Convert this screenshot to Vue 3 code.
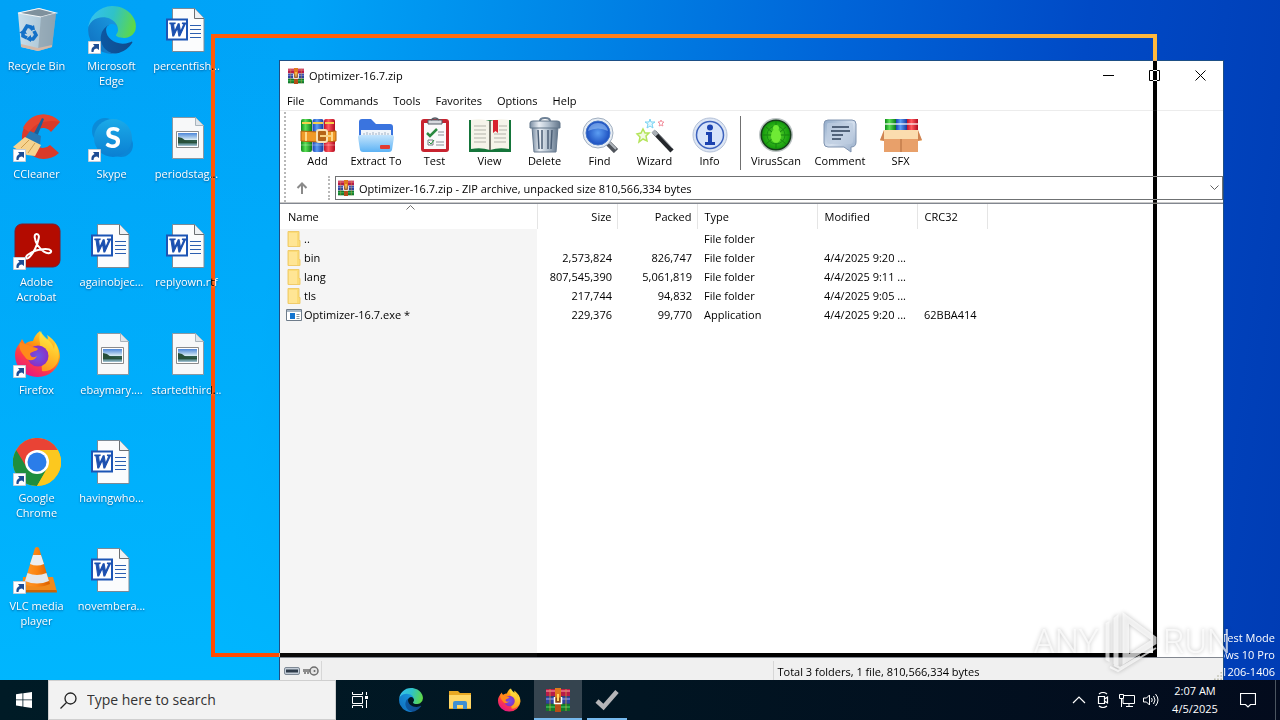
<template>
  <div class="desktop">
    <svg class="sprite" aria-hidden="true">
      <defs>
        <linearGradient id="g-edge-dark" x1="0" x2="1"><stop offset="0" stop-color="#0c59a4" /><stop offset="1" stop-color="#114a8b" /></linearGradient>
        <linearGradient id="g-edge-blue" x1="1" y1="0" x2="0" y2="1"><stop offset="0" stop-color="#1b9de2" /><stop offset="1" stop-color="#0f6cbd" /></linearGradient>
        <linearGradient id="g-edge-green" x1="0" y1="0.3" x2="1" y2="0.5"><stop offset="0" stop-color="#35c1f1" /><stop offset="0.5" stop-color="#2fc2c8" /><stop offset="1" stop-color="#5fd945" /></linearGradient>
        <linearGradient id="g-fox" x1="0.9" y1="0" x2="0.3" y2="1"><stop offset="0" stop-color="#fff44f" /><stop offset="0.4" stop-color="#ff980e" /><stop offset="0.7" stop-color="#ff3b47" /><stop offset="1" stop-color="#e31587" /></linearGradient>
        <linearGradient id="g-flame" x1="0.6" y1="0" x2="0.4" y2="1"><stop offset="0" stop-color="#fff44f" /><stop offset="1" stop-color="#ffa916" /></linearGradient>
        <linearGradient id="g-skype" x1="0" x2="0" y2="1"><stop offset="0" stop-color="#1baae8" /><stop offset="1" stop-color="#0a7fd2" /></linearGradient>
        <linearGradient id="g-bin" x1="0" x2="1"><stop offset="0" stop-color="#dfe5ea" /><stop offset="0.6" stop-color="#c3ccd4" /><stop offset="1" stop-color="#9aa9b5" /></linearGradient>
        <linearGradient id="g-cone" x1="0" x2="1"><stop offset="0" stop-color="#ff9a2c" /><stop offset="0.5" stop-color="#fb8410" /><stop offset="1" stop-color="#d95f00" /></linearGradient>
        <linearGradient id="g-folder" x1="0" x2="0" y2="1"><stop offset="0" stop-color="#c4e4fc" /><stop offset="1" stop-color="#5db3f5" /></linearGradient>
        <linearGradient id="g-metal" x1="0" x2="1"><stop offset="0" stop-color="#7b8ea3" /><stop offset="0.3" stop-color="#e9eef4" /><stop offset="0.6" stop-color="#b3c1cf" /><stop offset="1" stop-color="#62758a" /></linearGradient>
        <linearGradient id="g-bubble" x1="0" y1="0" x2="1" y2="1"><stop offset="0" stop-color="#8fa9c8" /><stop offset="0.5" stop-color="#d5e0ee" /><stop offset="1" stop-color="#93a9c6" /></linearGradient>
        <linearGradient id="g-sky" x1="0" x2="0" y2="1"><stop offset="0" stop-color="#4c86d8" /><stop offset="0.5" stop-color="#d3e8f3" /><stop offset="0.55" stop-color="#2c5a48" /><stop offset="0.75" stop-color="#33655a" /><stop offset="1" stop-color="#a8c8dc" /></linearGradient>
        <radialGradient id="g-lens"><stop offset="0" stop-color="#5b9df2" /><stop offset="1" stop-color="#1c4fc0" /></radialGradient>
        <radialGradient id="g-virus"><stop offset="0" stop-color="#5fdc2e" /><stop offset="1" stop-color="#139a0c" /></radialGradient>
        <radialGradient id="g-purple"><stop offset="0" stop-color="#6b57e8" /><stop offset="1" stop-color="#8b2fc4" /></radialGradient>
        <linearGradient id="g-red" x1="0" x2="1"><stop offset="0" stop-color="#c4102a" /><stop offset="0.4" stop-color="#ff5a5f" /><stop offset="1" stop-color="#b3091f" /></linearGradient>
        <linearGradient id="g-blue" x1="0" x2="1"><stop offset="0" stop-color="#1a3fb4" /><stop offset="0.4" stop-color="#5a9cf5" /><stop offset="1" stop-color="#1a3a9c" /></linearGradient>
        <linearGradient id="g-green" x1="0" x2="1"><stop offset="0" stop-color="#0d8a1a" /><stop offset="0.4" stop-color="#5be055" /><stop offset="1" stop-color="#0a7a18" /></linearGradient>
      </defs>

      <!-- desktop icons, 48 x 48 -->
      <symbol id="recycle" viewBox="0 0 48 48">
        <path d="M5 7 26 2l17 5-4 34-14 4-17-4z" fill="url(#g-bin)" opacity="0.9" />
        <path d="M5 7 26 2.500l17 4.500-15 4z" fill="#7f919d" stroke="#f4f7f9" stroke-width="1.200" />
        <path d="M28 11 43 7l-4 34-14 4z" fill="#8fa1ae" opacity="0.75" />
        <path d="M8 38l17 4 14-3v2l-14 4-17-4z" fill="#d4b9a8" />
        <path d="M11 25l3-5 4 1 2 3M21 25l2 4-3 4h-3M14 32l-4-2v-3" fill="none" stroke="#1471c8" stroke-width="3.600" />
        <path d="M22 24l-6-1 5-4zM18 29v7l-5-3zM6 27l5-4 3 5z" fill="#1471c8" />
      </symbol>
      <symbol id="edge" viewBox="4 5 257 256">
        <path fill="url(#g-edge-dark)" d="M235.680 195.460a93.730 93.730 0 0 1-10.540 4.710 101.870 101.870 0 0 1-35.900 6.460c-47.320 0-88.540-32.550-88.540-74.320A31.480 31.480 0 0 1 117.130 105c-42.800 1.800-53.800 46.400-53.800 72.530 0 73.880 68.090 81.370 82.760 81.370 7.910 0 19.840-2.300 27-4.560l1.310-.44a128.340 128.340 0 0 0 66.600-52.800 4 4 0 0 0-5.320-5.640z" />
        <path fill="url(#g-edge-blue)" d="M110.340 246.340A79.200 79.200 0 0 1 87.600 225a80.720 80.720 0 0 1 29.530-120c3.120-1.470 8.450-4.130 15.540-4a32.350 32.350 0 0 1 25.690 13 31.880 31.880 0 0 1 6.360 18.660c0-.21 24.460-79.600-80-79.600-43.900 0-80 41.660-80 78.210a130.150 130.150 0 0 0 12.110 56 128 128 0 0 0 156.380 67.110 75.550 75.550 0 0 1-62.780-8z" />
        <path fill="url(#g-edge-green)" d="M156.940 153.780c-.81 1.050-3.300 2.500-3.300 5.660 0 2.610 1.700 5.120 4.720 7.230 14.380 10 41.490 8.680 41.560 8.680a59.560 59.560 0 0 0 30.270-8.350A61.380 61.380 0 0 0 260.500 114.190c.26-22.410-8-37.310-11.340-43.910C228 28.880 182.300 5 132.610 5a128 128 0 0 0-128 126.200c.48-36.540 36.800-66.050 80-66.050 3.500 0 23.460.34 42 10.070 16.340 8.580 24.900 18.940 30.850 29.210 6.180 10.670 7.280 24.150 7.280 29.520s-2.740 13.330-7.800 19.830z" />
      </symbol>
      <symbol id="word" viewBox="0 0 48 48">
        <path d="M9.500 2.500h22l9.500 10v33H9.500z" fill="#fbfcfd" stroke="#7c8a96" />
        <path d="M31.500 2.500v10H41" fill="#eef1f4" stroke="#6b6f73" />
        <path d="M27 19.500h11M27 23.500h11M27 27.500h11M27 31.500h11" stroke="#2b5eb0" />
        <path d="M4 13.500h20v20H4z" fill="#fff" stroke="#1c55b5" stroke-width="2" />
        <text x="14" y="30" text-anchor="middle" font-family="Liberation Serif, serif" font-size="19" font-weight="700" font-style="italic" fill="#1c50b0" stroke="#1c50b0">W</text>
      </symbol>
      <symbol id="image" viewBox="0 0 48 48">
        <path d="M9.500 3.500h23l8 8v33h-31z" fill="#f7f8f9" stroke="#8a98a3" />
        <path d="M32.500 3.500v8h8" fill="#dfe5ea" stroke="#a9b3bb" />
        <path d="M13.500 17.500h22v16h-22z" fill="#fff" stroke="#8b8b8b" />
        <path d="M15 19h19v13H15z" fill="url(#g-sky)" />
        <path d="M15 23l4 1 4 3 11 1v1H15z" fill="#28503a" />
      </symbol>
      <symbol id="ccleaner" viewBox="0 0 48 48">
        <path d="M47 8A22 22 0 1 0 46 39l-9-8A10 10 0 1 1 38 18z" fill="#d93a2a" />
        <path d="M47 8A22 22 0 0 0 10 14l6 4Q26 4 47 8z" fill="#e5462f" />
        <path d="M29 4l2 1-7 18-4-2z" fill="#1b5f99" />
        <path d="M17 17l11 5-1 9-15-7z" fill="#2778b5" />
        <path d="M12 23l16 8-6 11-8-1-14-8z" fill="#f6d38f" />
        <path d="M8 34l8-8M15 39l7-10" stroke="#cf9d4d" />
      </symbol>
      <symbol id="skype" viewBox="0 0 48 48">
        <circle cx="17" cy="17" r="13" fill="#0b8bd8" />
        <circle cx="33" cy="31" r="12" fill="#0b86d6" />
        <circle cx="25" cy="24" r="19" fill="url(#g-skype)" />
        <text x="25" y="34" text-anchor="middle" font-family="Lato, sans-serif" font-size="29" font-weight="900" fill="#fff">S</text>
      </symbol>
      <symbol id="acrobat" viewBox="0 0 48 48">
        <rect x="2" y="2" width="45" height="43" rx="7" fill="#b30b00" stroke="#7e1a2c" />
        <path d="M23.500 12c-3 0-2 6 1 11 4 6 9 9 12 8s2-4-4-4c-7 0-14 3-18 6-3 3-1 5 2 2 4-4 8-12 9-18 1-3 0-5-2-5z" fill="none" stroke="#fff" stroke-width="2" />
      </symbol>
      <symbol id="firefox" viewBox="0 0 48 48">
        <path d="M7 13l2-4 3 5c2-2 5-3 8-3 1-4 3-7 7-10 2 4 3 6 7 9 1-1 1-3 0-5 8 5 13 13 13 22A22 22 0 0 1 25 47 22 22 0 0 1 2 25c0-5 2-9 5-12z" fill="url(#g-fox)" />
        <path d="M28 1c1 6 11 9 13 18l1-6c5 7 5 17 1 22-4 5-9 7-14 6l-2-28c-1-4-1-8 1-12z" fill="url(#g-flame)" opacity="0.850" />
        <circle cx="25" cy="26" r="10.500" fill="url(#g-purple)" />
        <path d="M7 12c3 2 8 2 12 5 3 0 5 1 6 2-2 3-7 2-8 5 1 4 4 4 7 2-2 5-9 6-12 1-3-4-7-8-5-15z" fill="#ff8a1a" />
      </symbol>
      <symbol id="chrome" viewBox="0 0 48 48">
        <circle cx="24" cy="24" r="24" fill="#fbbc04" />
        <path d="M24 24 3.200 12A24 24 0 0 0 24 48l10.400-18z" fill="#1e8e3e" />
        <path d="M24 12h20.800a24 24 0 0 1-20.800 36l10.400-18z" fill="#fcc81f" />
        <path d="M3.200 12A24 24 0 0 1 44.800 12H24L14 30z" fill="#e94335" />
        <circle cx="24" cy="24" r="12" fill="#fff" />
        <circle cx="24" cy="24" r="9.500" fill="#2b7de9" />
      </symbol>
      <symbol id="vlc" viewBox="0 0 48 48">
        <path d="M10 31h30l4 15H9z" fill="#f08a1c" />
        <path d="M9 44h34.500l.5 2.500H9z" fill="#c96405" />
        <path d="M22 2q2-2 4 0l11 36q-13 6-26 0z" fill="url(#g-cone)" />
        <path d="M20 9h8l3 9q-7 3-14 0z" fill="#eceef0" />
        <path d="M14.500 27q9.500 4 19 0l2.500 8q-12 5-24 0z" fill="#e4e7ea" />
      </symbol>
      <symbol id="shortcut" viewBox="0 0 13 13">
        <path d="M.5.5h12v12H.5z" fill="#fff" stroke="#c3cdd8" />
        <path d="M3.500 11c-.5-3 .5-5 3-6L5 3h6v6L9 7.500C7 7.500 5.500 8.500 5.500 11z" fill="#1d4d94" />
      </symbol>

      <!-- WinRAR -->
      <symbol id="rar" viewBox="0 0 24 24">
        <path d="M0 1h24v7H0z" fill="#b81c48" /><path d="M0 2h24v2H0z" fill="#e0607a" />
        <path d="M0 8.500h24v7H0z" fill="#2f449f" /><path d="M0 10h24v2H0z" fill="#6577cc" />
        <path d="M0 16h24v7H0z" fill="#137a2b" /><path d="M0 18h24v2H0z" fill="#30a94c" />
        <path d="M4 1v22M20 1v22" stroke="#d8a23c" stroke-opacity="0.700" />
        <path d="M9 0h6v24H9z" fill="#e07a1c" />
        <path d="M9 16h6v8H9z" fill="#b54d18" />
        <path d="M8.500 9.500h7v6h-7z" fill="#8a4516" />
        <path d="M8.500 9v6.500h7V9" fill="none" stroke="#fff" stroke-width="1.500" />
        <path d="M12 6v7" stroke="#ffd561" stroke-width="2" />
      </symbol>
      <symbol id="add" viewBox="0 0 36 36">
        <rect x="1" y="2" width="11" height="33" rx="2" fill="url(#g-green)" />
        <rect x="12.500" y="2" width="11" height="33" rx="2" fill="url(#g-blue)" />
        <rect x="24" y="2" width="11" height="33" rx="2" fill="url(#g-red)" />
        <path d="M2 6h9M13 6h10M25 6h9" stroke="#f5d04c" stroke-width="2" />
        <path d="M1 28h11M12.500 28h11M24 28h11" stroke="#fff" stroke-opacity="0.350" />
        <path d="M1 14q17 2 35 0v10q-18 2-35 0z" fill="#f09a28" stroke="#b5610d" />
        <path d="M6 15v9M32 15v9" stroke="#ffd98a" stroke-width="2" />
        <rect x="17" y="13" width="10" height="12" rx="2" fill="#b56418" stroke="#f8e2b4" stroke-width="2" />
        <path d="M20 19h11" stroke="#f8d080" stroke-width="2" />
      </symbol>
      <symbol id="extract" viewBox="0 0 36 36">
        <path d="M1 5q0-3 3-3h9l5 5h14q3 0 3 3v16H1z" fill="#3a74df" />
        <path d="M3 13h30v12H3z" fill="#f1f5fa" />
        <path d="M6 16v3M9 15v4M12 16v3M15 15v4M18 16v3M21 15v4M24 16v3M27 15v4M30 16v3" stroke="#9eb0c4" />
        <path d="M0 20q0-2 2-2h32q2 0 2 2l-2 13q-.5 2-3 2H5q-2.500 0-3-2z" fill="url(#g-folder)" />
        <rect x="22" y="28" width="10" height="4" rx="1" fill="#e23b32" />
      </symbol>
      <symbol id="test" viewBox="0 0 36 36">
        <rect x="4" y="2" width="28" height="33" rx="3" fill="#c8232f" />
        <path d="M7 6h22v26H7z" fill="#fafafa" />
        <path d="M11 3h14v4H11z" fill="#d7dade" stroke="#555d66" />
        <path d="M14 3q4-4 8 0" fill="none" stroke="#555d66" stroke-width="1.500" />
        <path d="M10 16l3 3 7-7" fill="none" stroke="#2b8a3f" stroke-width="2.500" />
        <path d="M21 15h6M21 18h6M19 25h8M19 28h8" stroke="#8d9299" />
        <path d="M11 23h5v5h-5z" fill="none" stroke="#777d84" /><path d="M12 25l2 2 3-4" stroke="#23943a" fill="none" />
      </symbol>
      <symbol id="view" viewBox="0 0 42 36">
        <path d="M0 3h42v32H0z" fill="#15753a" />
        <path d="M2 3q10-2 19 1 9-3 19-1v29q-10-2-19 1-9-3-19-1z" fill="#f6f4ea" />
        <path d="M21 4v29" stroke="#77796d" stroke-width="2" />
        <path d="M5 9h12M5 13h12M5 17h12M5 21h12M5 25h12M25 17h12M25 21h12M25 25h12M30 9h8M30 13h8" stroke="#b3b3aa" />
        <path d="M24 3h5v13l-2.500-2-2.500 2z" fill="#d8222f" />
      </symbol>
      <symbol id="delete" viewBox="0 0 36 36">
        <path d="M13 4q0-3 5-3t5 3" fill="none" stroke="#6e8196" stroke-width="2" />
        <path d="M5 10h26l-2 25H7z" fill="url(#g-metal)" stroke="#66798e" />
        <path d="M11 13l1 19M15 13v19M21 13v19M25 13l-1 19" stroke="#4c5f76" stroke-width="1.500" />
        <path d="M3 6q0-2 3-2h24q3 0 3 2v5H3z" fill="url(#g-metal)" stroke="#607488" />
      </symbol>
      <symbol id="find" viewBox="0 0 36 36">
        <path d="M24 24l10 10" stroke="#4f545b" stroke-width="6" /><path d="M25 23l9 9" stroke="#b0b6bd" stroke-width="2" />
        <circle cx="16" cy="16" r="15" fill="#e7edf4" stroke="#a1afc0" />
        <circle cx="16" cy="16" r="12" fill="url(#g-lens)" stroke="#4475c7" />
        <path d="M6 14q2-8 10-8t10 8q-10-5-20 0z" fill="#a8cdfa" opacity="0.500" />
      </symbol>
      <symbol id="wizard" viewBox="0 0 36 36">
        <path d="M17 15l18 19" stroke="#24272b" stroke-width="4.500" /><path d="M16 14l4 4" stroke="#a9afb5" stroke-width="4.500" /><path d="M19 14l16 17" stroke="#8b9096" />
        <path d="M6 12l2 4 4 0-3 3 1 5-4-2-4 3 1-5-3-3 4-1z" fill="#f2fae0" stroke="#b4e45a" stroke-width="1.500" />
        <path d="M13 2l1 3h4l-3 2 1 4-3-2-3 2 1-4-3-2h4z" fill="#e4f8ff" stroke="#7ad3f2" />
        <path d="M24 3l1 2h2l-2 2 1 2-2-1-2 1 1-2-2-2h2z" fill="#fff" stroke="#f2929f" />
      </symbol>
      <symbol id="info" viewBox="0 0 36 36">
        <circle cx="18" cy="18" r="17" fill="#dde6f4" stroke="#b4c1d8" />
        <circle cx="18" cy="18" r="13.500" fill="#d7e4fa" stroke="#3d62bd" stroke-width="1.500" />
        <circle cx="18" cy="10.500" r="3" fill="#1c43b0" />
        <path d="M14 15h6v10h3v3H13v-3h3v-7h-2z" fill="#1c43b0" />
      </symbol>
      <symbol id="virus" viewBox="0 0 36 36">
        <circle cx="18" cy="18" r="17" fill="#bcc3c4" /><circle cx="18" cy="18" r="15.500" fill="#173e1b" />
        <circle cx="18" cy="18" r="14" fill="url(#g-virus)" />
        <path d="M4 18h28M18 4v28M8 10l20 17M28 10L8 27" stroke="#17810f" />
        <circle cx="18" cy="18" r="9" fill="none" stroke="#189014" />
        <ellipse cx="18" cy="19" rx="5" ry="7" fill="#6fea35" /><circle cx="18" cy="11" r="3" fill="#6fea35" />
      </symbol>
      <symbol id="comment" viewBox="0 0 36 36">
        <path d="M6 3h24q4 0 4 4v18q0 5-5 5v5l-7-5H6q-4 0-4-4V7q0-4 4-4z" fill="url(#g-bubble)" stroke="#8094b0" />
        <path d="M6 6h24q1 0 1 2v16q0 3-3 3H8q-3 0-3-3V8q0-2 1-2z" fill="#bccce0" opacity="0.700" />
        <path d="M10 10h17M9 14h19M10 18h11M10 22h9" stroke="#2e405a" stroke-width="1.500" />
      </symbol>
      <symbol id="sfx" viewBox="0 0 42 36">
        <path d="M5 2h11v14H5z" fill="url(#g-green)" /><path d="M16 2h11v14H16z" fill="url(#g-blue)" /><path d="M27 2h11v14H27z" fill="url(#g-red)" />
        <path d="M5 7h33" stroke="#fff" stroke-opacity="0.600" stroke-width="2" />
        <path d="M4 13h34l4 11H0z" fill="#fbdcae" />
        <path d="M4 13l-4 10 4 1zM38 13l4 10-4 1z" fill="#d08452" />
        <path d="M4 22h34v13H4z" fill="#e8a06a" /><path d="M21 22v13" stroke="#b06a3a" />
      </symbol>

      <!-- list and status icons -->
      <symbol id="folder" viewBox="0 0 14 16">
        <path d="M1 .5h11v9h1v6H1z" fill="#fbdc77" stroke="#f0cb6a" /><path d="M2 2h8v13H2z" fill="#ffe594" />
      </symbol>
      <symbol id="exe" viewBox="0 0 16 12">
        <path d="M.5.5h15v11H.5z" fill="#fff" stroke="#6e7c8a" /><path d="M1 1h14v2H1z" fill="#aab8c6" />
        <path d="M4 4h5v6H4z" fill="#1273cf" /><path d="M10.500 5.500h3M10.500 7.500h3M10.500 9.500h3" stroke="#8b96a1" />
      </symbol>
      <symbol id="drive" viewBox="0 0 16 8">
        <rect x="0.500" y="0.500" width="15" height="7" rx="1.500" fill="#c4cdd8" stroke="#7d8894" /><path d="M2 2.500h12v3H2z" fill="#2f3c4b" />
      </symbol>
      <symbol id="key" viewBox="0 0 16 10">
        <path d="M0 3h8v3H6v2H4V6H3v2H1V6H0z" fill="#8d8d8d" />
        <circle cx="11" cy="5" r="4" fill="#e4e4e4" stroke="#6d6d6d" stroke-width="1.500" /><circle cx="11.500" cy="5" r="1" fill="#666" />
      </symbol>

      <!-- taskbar -->
      <symbol id="start" viewBox="0 0 16 16">
        <path d="M0 2.200 6.500 1.300v6.200H0zM7.300 1.200 16 0v7.500H7.300zM0 8.300h6.500v6.200L0 13.600zM7.300 8.300H16V16l-8.700-1.200z" fill="#fff" />
      </symbol>
      <symbol id="taskview" viewBox="0 0 18 18">
        <path d="M1.500 1v2.500h10V1M1.500 17v-2.500h10V17M1.500 5.500h10v7h-10zM15.500 1v3M15.500 9v8" fill="none" stroke="#fff" /><path d="M14 5h3v3h-3z" fill="#fff" />
      </symbol>
      <symbol id="explorer" viewBox="0 0 24 24">
        <path d="M1 3h9l2 2h11v16H1z" fill="#e8a823" /><path d="M1 7h22v13H1z" fill="#ffd767" />
        <path d="M5 21v-6q0-2 2-2h10q2 0 2 2v6h-4v-4H9v4z" fill="#3f8fd2" />
      </symbol>
      <symbol id="check" viewBox="0 0 24 24">
        <path d="M2 13l6.500 6L22 3.500" fill="none" stroke="#b5b5b8" stroke-width="4.500" />
      </symbol>
      <symbol id="tray-up" viewBox="0 0 16 16"><path d="M2 11l6-6 6 6" fill="none" stroke="#fff" stroke-width="1.200" /></symbol>
      <symbol id="tray-cam" viewBox="0 0 16 16">
        <path d="M3.500 4.500h6v7h-6zM9.500 7l3-2v6l-3-2M4 2q4-3 8 0M4 14q4 3 8 0" fill="none" stroke="#fff" stroke-width="1.200" />
      </symbol>
      <symbol id="tray-net" viewBox="0 0 16 16">
        <path d="M5 3.500h10.500v8H4V7M7 14.500h7M10 12v2M.5 2.500h4v4h-4zM2.500 7v8" fill="none" stroke="#fff" />
      </symbol>
      <symbol id="tray-vol" viewBox="0 0 16 16">
        <path d="M.5 6h3l3-3v10l-3-3h-3zM8.500 6q1.500 2 0 4M10.500 4q3 4 0 8M12.500 2q5 6 0 12" fill="none" stroke="#fff" />
      </symbol>
      <symbol id="notice" viewBox="0 0 16 16">
        <path d="M.5 1.500h15v11h-5L8 15l-2.500-2.500h-5z" fill="none" stroke="#fff" stroke-width="1.200" />
      </symbol>
    </svg>

    <main class="workspace">
      <div class="icon-grid">
        <a v-for="item in shortcuts" :key="item.label" href="#" class="shortcut">
          <span class="shortcut-icon">
            <svg class="icon-48"><use :href="'#' + item.icon" /></svg>
            <svg v-if="item.link" class="link-arrow"><use href="#shortcut" /></svg>
          </span>
          <span class="shortcut-label">{{ item.label }}</span>
        </a>
      </div>

      <div class="build-info">
        <span>Test Mode</span>
        <span>Windows 10 Pro</span>
        <span>191206-1406</span>
      </div>

      <section class="window">
        <header class="titlebar">
          <svg class="icon-16"><use href="#rar" /></svg>
          <h1>Optimizer-16.7.zip</h1>
          <button class="win-btn" aria-label="Minimize">
            <svg viewBox="0 0 11 11"><path d="M0 5.500h11" /></svg>
          </button>
          <button class="win-btn" aria-label="Maximize">
            <svg viewBox="0 0 11 11"><path d="M.5.5h10v10H.5z" /></svg>
          </button>
          <button class="win-btn" aria-label="Close">
            <svg viewBox="0 0 11 11"><path d="M.5.5l10 10M10.500.5l-10 10" /></svg>
          </button>
        </header>

        <nav class="menubar">
          <button v-for="m in menus" :key="m">{{ m }}</button>
        </nav>

        <div class="toolbars">
          <div class="toolbar">
            <template v-for="t in tools" :key="t.label">
              <span v-if="t.label === 'VirusScan'" class="tool-sep"></span>
              <button class="tool" :class="{ wide: t.wide }">
                <svg><use :href="'#' + t.icon" /></svg>
                <span>{{ t.label }}</span>
              </button>
            </template>
          </div>
          <div class="address-row">
            <button class="up-btn" aria-label="Up">
              <svg viewBox="0 0 12 12"><path d="M6 12V1.500M1.500 6 6 1.500 10.500 6" /></svg>
            </button>
            <div class="address">
              <svg class="icon-16"><use href="#rar" /></svg>
              <input v-model="address" aria-label="Archive path" />
              <button aria-label="Show path list">
                <svg viewBox="0 0 9 6"><path d="M.5.5l4 4 4-4" /></svg>
              </button>
            </div>
          </div>
        </div>

        <div class="file-list">
          <svg class="sort-mark" viewBox="0 0 9 5"><path d="M.5 4.500l4-4 4 4" /></svg>
          <table>
            <colgroup>
              <col class="c-name" /><col class="c-num" /><col class="c-num" />
              <col class="c-type" /><col class="c-date" /><col class="c-crc" /><col />
            </colgroup>
            <thead>
              <tr>
                <th>Name</th><th class="num">Size</th><th class="num">Packed</th>
                <th>Type</th><th>Modified</th><th>CRC32</th><th></th>
              </tr>
            </thead>
            <tbody>
              <tr v-for="f in files" :key="f.name">
                <td>
                  <div class="file-name">
                    <svg :class="f.icon"><use :href="'#' + f.icon" /></svg>{{ f.name }}
                  </div>
                </td>
                <td class="num">{{ f.size }}</td>
                <td class="num">{{ f.packed }}</td>
                <td>{{ f.type }}</td>
                <td>{{ f.modified }}</td>
                <td>{{ f.crc }}</td>
                <td></td>
              </tr>
            </tbody>
          </table>
        </div>

        <footer class="statusbar">
          <div class="status-icons">
            <svg class="drive"><use href="#drive" /></svg>
            <svg class="key"><use href="#key" /></svg>
          </div>
          <div class="status-cell"></div>
          <div class="status-cell">Total 3 folders, 1 file, 810,566,334 bytes</div>
          <svg class="grip" viewBox="0 0 10 10"><path d="M8 0h2v2H8zM8 4h2v2H8zM8 8h2v2H8zM4 4h2v2H4zM4 8h2v2H4zM0 8h2v2H0z" /></svg>
        </footer>
      </section>

      <!-- outline of the window while it is dragged, inverts what is below -->
      <div class="drag-outline"></div>

      <div class="brand">
        <span>ANY</span>
        <svg viewBox="0 0 58 62">
          <path d="M3.500 50V13l4-2v41zM11.500 54V8l5-4v52z" />
          <path d="M20.500 2l34 25v7l-34 21zM27 14v30l22-14z" fill-rule="evenodd" />
          <path d="M8 57l8 4 38-23M12 55l6 3 20-12" class="stroke" />
        </svg>
        <span>RUN</span>
      </div>
    </main>

    <footer class="taskbar">
      <button class="task start" aria-label="Start"><svg class="icon-16"><use href="#start" /></svg></button>
      <label class="search">
        <svg viewBox="0 0 17 17"><circle cx="10.500" cy="6.500" r="5.500" /><path d="M6.500 10.500.5 16.500" /></svg>
        <input type="text" placeholder="Type here to search" aria-label="Search" />
      </label>
      <button class="task view" aria-label="Task View"><svg class="icon-18"><use href="#taskview" /></svg></button>
      <button
        v-for="app in apps"
        :key="app.name"
        class="task"
        :class="{ active: app.active, running: app.running }"
        :aria-label="app.name"
      >
        <svg class="icon-24"><use :href="'#' + app.icon" /></svg>
      </button>
      <div class="tray">
        <button v-for="t in tray" :key="t" class="tray-btn" :aria-label="t">
          <svg class="icon-16"><use :href="'#' + t" /></svg>
        </button>
        <button class="clock"><span>2:07 AM</span><span>4/5/2025</span></button>
        <button class="notice" aria-label="Notifications"><svg class="icon-16"><use href="#notice" /></svg></button>
        <button class="show-desktop" aria-label="Show desktop"></button>
      </div>
    </footer>
  </div>
</template>

<script setup>
import { ref } from 'vue'

const address = ref('Optimizer-16.7.zip - ZIP archive, unpacked size 810,566,334 bytes')

// listed column by column, six per column
const shortcuts = [
  { label: 'Recycle Bin', icon: 'recycle' },
  { label: 'CCleaner', icon: 'ccleaner', link: true },
  { label: 'Adobe Acrobat', icon: 'acrobat', link: true },
  { label: 'Firefox', icon: 'firefox', link: true },
  { label: 'Google Chrome', icon: 'chrome', link: true },
  { label: 'VLC media player', icon: 'vlc', link: true },
  { label: 'Microsoft Edge', icon: 'edge', link: true },
  { label: 'Skype', icon: 'skype', link: true },
  { label: 'againobjec...', icon: 'word' },
  { label: 'ebaymary....', icon: 'image' },
  { label: 'havingwho...', icon: 'word' },
  { label: 'novembera...', icon: 'word' },
  { label: 'percentfish...', icon: 'word' },
  { label: 'periodstag...', icon: 'image' },
  { label: 'replyown.rtf', icon: 'word' },
  { label: 'startedthird...', icon: 'image' }
]

const menus = ['File', 'Commands', 'Tools', 'Favorites', 'Options', 'Help']

const tools = [
  { label: 'Add', icon: 'add' },
  { label: 'Extract To', icon: 'extract', wide: true },
  { label: 'Test', icon: 'test' },
  { label: 'View', icon: 'view' },
  { label: 'Delete', icon: 'delete' },
  { label: 'Find', icon: 'find' },
  { label: 'Wizard', icon: 'wizard' },
  { label: 'Info', icon: 'info' },
  { label: 'VirusScan', icon: 'virus', wide: true },
  { label: 'Comment', icon: 'comment', wide: true },
  { label: 'SFX', icon: 'sfx' }
]

const files = [
  { name: '..', icon: 'folder', type: 'File folder' },
  { name: 'bin', icon: 'folder', size: '2,573,824', packed: '826,747', type: 'File folder', modified: '4/4/2025 9:20 ...' },
  { name: 'lang', icon: 'folder', size: '807,545,390', packed: '5,061,819', type: 'File folder', modified: '4/4/2025 9:11 ...' },
  { name: 'tls', icon: 'folder', size: '217,744', packed: '94,832', type: 'File folder', modified: '4/4/2025 9:05 ...' },
  { name: 'Optimizer-16.7.exe *', icon: 'exe', size: '229,376', packed: '99,770', type: 'Application', modified: '4/4/2025 9:20 ...', crc: '62BBA414' }
]

const apps = [
  { name: 'Edge', icon: 'edge' },
  { name: 'File Explorer', icon: 'explorer' },
  { name: 'Firefox', icon: 'firefox' },
  { name: 'WinRAR', icon: 'rar', active: true },
  { name: 'Tasks', icon: 'check', running: true }
]

const tray = ['tray-up', 'tray-cam', 'tray-net', 'tray-vol']
</script>

<style>
body { margin: 0; overflow: hidden; }
</style>

<style scoped>
.desktop {
  display: flex;
  flex-direction: column;
  height: 100vh;
  font-family: 'Open Sans', 'Noto Sans', sans-serif;
  font-size: 11px;
  line-height: 15px;
  color: #000;
}
.desktop * { box-sizing: border-box; }

.sprite { position: absolute; width: 0; height: 0; }

button, input {
  font: inherit;
  color: inherit;
  background: transparent;
  border: 0;
  padding: 0;
  margin: 0;
  outline: 0;
}

svg { display: block; flex-shrink: 0; overflow: visible; }
.icon-16 { width: 16px; height: 16px; }
.icon-18 { width: 18px; height: 18px; }
.icon-24 { width: 24px; height: 24px; }
.icon-48 { width: 48px; height: 48px; }

.workspace {
  position: relative;
  flex: 1;
  min-height: 0;
  overflow: hidden;
  isolation: isolate;
  background:
    linear-gradient(to top, rgba(0, 184, 255, 0.9), rgba(0, 184, 255, 0) 95%) 0 0 / 280px 100% no-repeat,
    linear-gradient(97deg, #00a2f6 0%, #00a4f8 22%, #0086e7 42%, #0064d8 62%, #004ac6 80%, #003cb4 100%);
}

/* Desktop icons */
.icon-grid {
  display: grid;
  grid-auto-flow: column;
  grid-template-rows: repeat(6, 108px);
  grid-auto-columns: 75px;
  justify-content: start;
}
.shortcut {
  display: flex;
  flex-direction: column;
  align-items: center;
  gap: 4px;
  padding: 6px 4px 0 2px;
  color: #fff;
  text-align: center;
  text-decoration: none;
}
.shortcut-icon { position: relative; }
.link-arrow { position: absolute; left: 0; bottom: 0; width: 13px; height: 13px; }
.shortcut-label { text-shadow: 0 1px 2px rgba(0, 40, 90, 0.6); }

.build-info {
  position: absolute;
  right: 5px;
  bottom: 1px;
  display: flex;
  flex-direction: column;
  gap: 2px;
  text-align: right;
  color: #fff;
}

/* WinRAR window */
.window {
  position: absolute;
  top: 60px;
  right: 56px;
  bottom: 0;
  left: 279px;
  display: flex;
  flex-direction: column;
  background: #fff;
  border: 1px solid #1d4f86;
  border-bottom: 0;
}

.titlebar { display: flex; align-items: center; height: 29px; padding-left: 8px; }
.titlebar h1 { flex: 1; margin: 0 0 0 5px; font-size: 11px; font-weight: 400; }
.win-btn { display: grid; place-items: center; width: 46px; height: 29px; }
.win-btn svg { width: 11px; height: 11px; fill: none; stroke: #000; }

.menubar { display: flex; gap: 15px; height: 20px; padding: 1px 0 0 7px; }

.toolbars {
  height: 93px;
  padding-left: 4px;
  border-top: 1px solid #ececec;
  border-bottom: 1px solid #c9c9c9;
  background: repeating-linear-gradient(#b8b8b8 0 2px, #fff 2px 4px) no-repeat 4px 1px / 2px 100%;
}
.toolbar { display: flex; height: 65px; padding-left: 6px; }
.tool {
  display: flex;
  flex-direction: column;
  align-items: center;
  width: 55px;
  padding-top: 6px;
}
.tool.wide { width: 62px; }
.tool svg { width: 42px; height: 36px; }
.tool-sep { width: 1px; height: 54px; margin: 5px 4px 0 3px; background: #707070; }
.tool-sep + .tool, .tool-sep + .tool + .tool { margin-right: 2px; }

.address-row { display: flex; height: 24px; }
.up-btn { display: grid; place-items: center; width: 46px; margin-right: 5px; padding-right: 8px; border-right: 2px dotted #b8b8b8; }
.up-btn svg { width: 12px; height: 12px; fill: none; stroke: #8a8a8a; stroke-width: 2; }
.address { display: flex; flex: 1; align-items: center; gap: 5px; padding: 0 3px 0 2px; border: 1px solid #6f7173; }
.address input { flex: 1; min-width: 0; }
.address button svg { width: 9px; height: 6px; fill: none; stroke: #606060; }

.file-list {
  position: relative;
  flex: 1;
  min-height: 0;
  border-top: 1px solid #828790;
  border-bottom: 1px solid #828790;
  background: linear-gradient(#f5f5f5, #f5f5f5) no-repeat 0 0 / 257px 100%;
}
.sort-mark { position: absolute; left: 126px; top: 1px; width: 9px; height: 5px; fill: none; stroke: #707070; }

table { width: 100%; table-layout: fixed; border-collapse: collapse; }
.c-name { width: 257px; }
.c-num { width: 80px; }
.c-type { width: 120px; }
.c-date { width: 100px; }
.c-crc { width: 70px; }
th, td { padding: 0 5px 0 7px; font-weight: 400; text-align: left; white-space: nowrap; }
th { height: 25px; background: #fff; border-right: 1px solid #e5e5e5; }
th:first-child { padding-left: 8px; }
th:last-child { border-right: 0; }
td { height: 19px; }
td:first-child { padding-left: 6px; }
.num { text-align: right; }
.file-name { display: flex; align-items: center; gap: 2px; }
.folder { width: 14px; height: 16px; margin: 0 1px; }
.exe { width: 16px; height: 12px; }

.statusbar { display: flex; height: 22px; padding-top: 3px; background: #f0f0f0; }
.status-icons { display: flex; align-items: center; gap: 3px; width: 42px; padding-left: 4px; border-right: 1px solid #d7d7d7; }
.drive { width: 16px; height: 8px; }
.key { width: 16px; height: 10px; }
.status-cell { flex: 1; padding: 3px 0 0 5px; }
.status-cell + .status-cell { padding-left: 4px; border-left: 1px solid #d7d7d7; }
.grip { position: absolute; right: 1px; bottom: 0; width: 8px; height: 8px; fill: #bdbdae; }

.drag-outline {
  position: absolute;
  top: 34px;
  right: 123px;
  bottom: 23px;
  left: 211px;
  border: 4px solid #fff;
  mix-blend-mode: difference;
  pointer-events: none;
}

.brand {
  position: absolute;
  right: 49px;
  bottom: 8px;
  display: flex;
  align-items: center;
  gap: 3px;
  font-family: Roboto, sans-serif;
  font-size: 34px;
  font-weight: 300;
  line-height: 40px;
  color: rgba(255, 255, 255, 0.7);
  filter: drop-shadow(0 0 2px rgba(0, 0, 0, 0.35));
  pointer-events: none;
}
.brand svg { width: 58px; height: 62px; fill: rgba(255, 255, 255, 0.7); }
.brand .stroke { fill: none; stroke: rgba(255, 255, 255, 0.7); stroke-width: 2; }

/* Taskbar */
.taskbar {
  display: flex;
  align-items: stretch;
  gap: 1px;
  height: 40px;
  background: linear-gradient(90deg, #001b26, #011522 50%, #030b1d);
  color: #fff;
}
.task { display: grid; place-items: center; width: 48px; }
.task.start { margin-right: -1px; }
.task.view { margin: 0 2px 0 -1px; }
.task.active { background: #35444f; box-shadow: inset 0 -2px #76b9ed; }
.task.running { background: linear-gradient(#76b9ed, #76b9ed) no-repeat center bottom / 40px 2px; }
.search {
  display: flex;
  align-items: center;
  gap: 10px;
  width: 288px;
  padding-left: 11px;
  background: #f2f2f2;
  border: 1px solid #cfcfcf;
  color: #333;
}
.search svg { width: 17px; height: 17px; fill: none; stroke: #222; stroke-width: 1.300; }
.search input { flex: 1; min-width: 0; font-size: 14px; line-height: 20px; }
.search input::placeholder { color: #333; opacity: 1; }

.tray { display: flex; margin-left: auto; }
.tray-btn { display: grid; place-items: center; width: 24px; }
.clock { display: flex; flex-direction: column; justify-content: center; gap: 3px; width: 50px; margin-left: 7px; padding-bottom: 2px; text-align: center; white-space: nowrap; }
.notice { display: grid; place-items: center; width: 55px; }
.show-desktop { width: 5px; border-left: 1px solid #4b5560; }
</style>
